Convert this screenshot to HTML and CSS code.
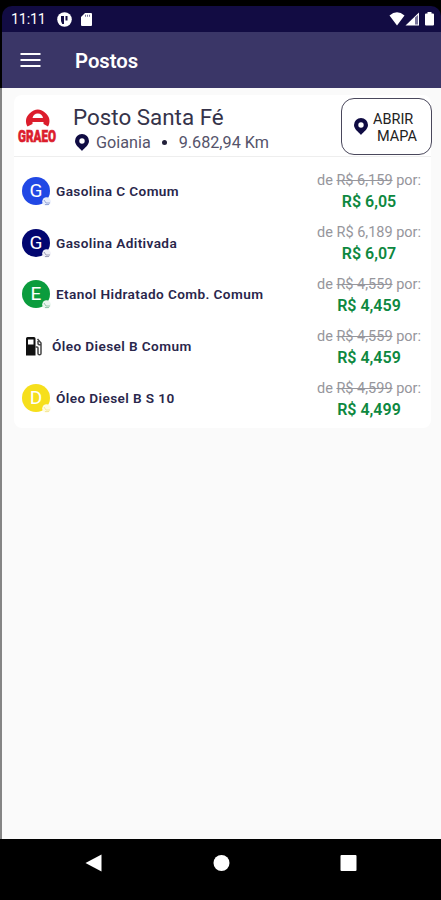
FILE: index.html
```html
<!DOCTYPE html>
<html lang="pt-BR">
<head>
    <meta charset="UTF-8">
    <meta name="viewport" content="width=device-width, initial-scale=1.0">
    <title>Postos</title>
    <link rel="stylesheet" href="styles.css">
</head>
<body>

<div class="phone">
    <div class="status-bar">
        <span class="clock">11:11</span>
        <svg class="status-app" width="15" height="15" viewBox="0 0 15 15">
            <circle cx="7.5" cy="7.5" r="7.3" fill="#fff"/>
            <path d="M4 4h3v8H5.2L4 9zM8.5 4h2v4.5h-2z" fill="#120c43"/>
        </svg>
        <svg class="status-card" width="11" height="13" viewBox="0 0 11 13">
            <path d="M4 0h6q1 0 1 1v11q0 1-1 1H1q-1 0-1-1V4z" fill="#fff"/>
            <path d="M4 1.8h1v2H4zM6 1.8h1v2H6zM8 1.8h1v2H8z" fill="#77739a"/>
        </svg>
        <svg class="status-signal" width="47" height="16" viewBox="0 0 47 16">
            <path d="M0.500 4.500Q8-1.800 15.500 4.500L8 14.500z" fill="#fff"/>
            <path d="M16.500 14.500L30 1.500v13z" fill="#fff"/>
            <path d="M26 6.500L29 4v9.500h-3z" fill="#77739a"/>
            <path d="M38.500 1h4v1.500h1.500q1 0 1 1v10q0 1-1 1h-7q-1 0-1-1v-10q0-1 1-1h1.500z" fill="#fff"/>
        </svg>
    </div>

    <div class="app-bar">
        <svg class="menu" width="21" height="16" viewBox="0 0 21 16">
            <path d="M0.500 2h20M0.500 8h20M0.500 14h20" stroke="#fff" stroke-width="2"/>
        </svg>
        <h1 class="title">Postos</h1>
    </div>

    <main class="content">
        <div class="card">
            <div class="station">
                <svg class="logo" width="41" height="46" viewBox="0 0 41 46">
                    <path d="M10.500 20.500C8 16.500 8.500 11 12.500 7.500Q20.800-0.500 29 7.500C33 11 33.500 16.500 31 20.500L26.500 18V16H15.500v2z" fill="#dc1d2c"/>
                    <path d="M15.500 12Q16.500 7.500 20.800 7.500T26 12z" fill="#fff"/>
                    <text transform="translate(1 36) scale(0.93 1.36)" class="logo-text">GRAEO</text>
                </svg>
                <div class="station-info">
                    <h2 class="station-name">Posto Santa Fé</h2>
                    <div class="station-place">
                        <svg class="pin" width="14" height="17" viewBox="0 0 14 17">
                            <path d="M7 0a7 7 0 0 0-7 7c0 4 4.500 7 7 10 2.500-3 7-6 7-10a7 7 0 0 0-7-7zm0 4.300a2.700 2.700 0 1 1 0 5.400 2.700 2.700 0 0 1 0-5.400z" fill="#100c43"/>
                        </svg>
                        <span class="city">Goiania</span>
                        <span class="dot"></span>
                        <span class="distance">9.682,94 Km</span>
                    </div>
                </div>
                <button class="map-button">
                    <svg width="14" height="17" viewBox="0 0 14 17">
                        <path d="M7 0a7 7 0 0 0-7 7c0 4 4.500 7 7 10 2.500-3 7-6 7-10a7 7 0 0 0-7-7zm0 4.300a2.700 2.700 0 1 1 0 5.400 2.700 2.700 0 0 1 0-5.400z" fill="#100c43"/>
                    </svg>
                    <span class="map-label">ABRIR<br><span class="map-second">MAPA</span></span>
                </button>
            </div>

            <ul class="fuels">
                <li class="fuel">
                    <span class="badge blue">G<svg class="drop" width="9" height="9" viewBox="0 0 9 9"><circle cx="4.500" cy="4.500" r="4.300" fill="#e8edfb"/><path d="M2 3l2 3h4M3 7.500h4" fill="none" stroke="#8295cf" stroke-width=".8"/></svg></span>
                    <span class="fuel-name">Gasolina C Comum</span>
                    <div class="price"><div class="old">de <s>R$ 6,159</s> por:</div><div class="new">R$ 6,05</div></div>
                </li>
                <li class="fuel">
                    <span class="badge navy">G<svg class="drop" width="9" height="9" viewBox="0 0 9 9"><circle cx="4.500" cy="4.500" r="4.300" fill="#eeeef6"/><path d="M2 3l2 3h4M3 7.500h4" fill="none" stroke="#8b8ba9" stroke-width=".8"/></svg></span>
                    <span class="fuel-name">Gasolina Aditivada</span>
                    <div class="price"><div class="old">de R$ 6,189 por:</div><div class="new">R$ 6,07</div></div>
                </li>
                <li class="fuel">
                    <span class="badge green">E<svg class="drop" width="9" height="9" viewBox="0 0 9 9"><circle cx="4.500" cy="4.500" r="4.300" fill="#e9f5ee"/><path d="M2 3l2 3h4M3 7.500h4" fill="none" stroke="#83b99a" stroke-width=".8"/></svg></span>
                    <span class="fuel-name">Etanol Hidratado Comb. Comum</span>
                    <div class="price"><div class="old">de <s>R$ 4,559</s> por:</div><div class="new">R$ 4,459</div></div>
                </li>
                <li class="fuel">
                    <svg class="pump" width="17" height="19" viewBox="0 0 17 19">
                        <path d="M1.500 0h6.500q1.500 0 1.500 1.500V18.500H0V1.500Q0 0 1.500 0zM2 2.500v5h5.500v-5z" fill="#111"/>
                        <path d="M9.500 10h1.500q1 0 1 1v5.500q0 1.300 1.500 1.300t1.500-1.300V6l-3.500-4M12 4v2.500q0 1.500 3 1.500" fill="none" stroke="#444" stroke-width="1.500"/>
                    </svg>
                    <span class="fuel-name">Óleo Diesel B Comum</span>
                    <div class="price"><div class="old">de <s>R$ 4,559</s> por:</div><div class="new">R$ 4,459</div></div>
                </li>
                <li class="fuel">
                    <span class="badge yellow">D<svg class="drop" width="9" height="9" viewBox="0 0 9 9"><circle cx="4.500" cy="4.500" r="4.300" fill="#fffbe0"/><path d="M2 3l2 3h4M3 7.500h4" fill="none" stroke="#f2e48b" stroke-width=".8"/></svg></span>
                    <span class="fuel-name">Óleo Diesel B S 10</span>
                    <div class="price"><div class="old">de <s>R$ 4,599</s> por:</div><div class="new">R$ 4,499</div></div>
                </li>
            </ul>
        </div>
    </main>

    <div class="nav-bar">
        <svg width="17" height="18" viewBox="0 0 17 18"><path d="M0.500 9L16.500 0.500v17z" fill="#fff"/></svg>
        <svg width="17" height="18" viewBox="0 0 17 18"><circle cx="8.500" cy="9" r="8" fill="#fff"/></svg>
        <svg width="17" height="18" viewBox="0 0 17 18"><rect x="0.500" y="1" width="16" height="16" rx="1" fill="#fff"/></svg>
    </div>
</div>

</body>
</html>
```
FILE: styles.css
```css
* {
    box-sizing: border-box;
}

body {
    margin: 0;
    background-color: #000000;
    font-family: Roboto, "Liberation Sans", sans-serif;
}

.phone {
    display: flex;
    flex-direction: column;
    height: 900px;
    padding-top: 6px;
    overflow: hidden;
}

.status-bar {
    display: flex;
    align-items: center;
    height: 26px;
    margin-left: 2px;
    padding: 0 5px 0 9px;
    background-color: #120c43;
    border-radius: 10px 10px 0 0;
    color: #fff;
}

.clock {
    width: 46px;
    font-size: 14.5px;
    letter-spacing: -0.3px;
}

.status-card {
    margin-left: 9px;
}

.status-signal {
    margin-left: auto;
}

.app-bar {
    display: flex;
    align-items: center;
    height: 56px;
    padding-left: 18px;
    margin-left: 2px;
    background-color: #3a3667;
    color: #fff;
}

.title {
    margin: 1px 0 0 34px;
    font-size: 20.3px;
    font-weight: 600;
}

.content {
    flex: 1;
    padding: 7px 10px 0 12px;
    border-left: 2px solid #858585;
    background-color: #fafafa;
}

.card {
    height: 333px;
    background-color: #fff;
    border-radius: 8px;
}

.station {
    display: flex;
    height: 62px;
    border-bottom: 1px solid #eeeeee;
}

.logo {
    margin: 11px 0 0 3px;
    overflow: visible;
}

.logo-text {
    font-size: 12.5px;
    font-weight: 900;
    fill: #dc1d2c;
    stroke: #dc1d2c;
    stroke-width: 0.5px;
}

.station-info {
    margin-left: 15px;
    padding-top: 9px;
}

.station-name {
    margin: 0;
    font-size: 22.4px;
    font-weight: 400;
    line-height: 26px;
    color: #35334a;
    white-space: nowrap;
}

.station-place {
    display: flex;
    align-items: center;
    height: 25px;
    margin-left: 2px;
    font-size: 16.2px;
    color: #55536a;
}

.city {
    margin-left: 7px;
}

.dot {
    width: 5px;
    height: 5px;
    margin: 0 12px 0 11px;
    border-radius: 50%;
    background-color: #22203a;
}

.map-button {
    display: flex;
    align-items: center;
    width: 91px;
    height: 57px;
    margin: 3px -1px 0 auto;
    padding: 0 0 0 12px;
    border: 1px solid #4a485c;
    border-radius: 13px;
    background-color: #fff;
    font-family: inherit;
    font-size: 14.5px;
    line-height: 17px;
    color: #222;
    text-align: left;
}

.map-label {
    margin: 2px 0 0 5px;
}

.map-second {
    margin-left: 4px;
}

.fuels {
    margin: 0;
    padding: 8px 9px 0 8px;
    list-style: none;
}

.fuel {
    display: flex;
    align-items: center;
    height: 51.8px;
}

.badge {
    position: relative;
    width: 28px;
    height: 28px;
    border-radius: 50%;
    color: #fff;
    font-size: 19px;
    line-height: 28px;
    text-align: center;
}

.drop {
    position: absolute;
    right: -1px;
    bottom: -1px;
}

.blue {
    background-color: #2148e5;
}

.navy {
    background-color: #020670;
}

.green {
    background-color: #0b9c3d;
}

.yellow {
    background-color: #f6df1c;
}

.pump {
    margin: 0 3px 0 4px;
}

.fuel-name {
    margin-left: 6px;
    font-size: 13.6px;
    font-weight: 600;
    letter-spacing: 0.4px;
    color: #29264b;
    white-space: nowrap;
}

.price {
    width: 106px;
    margin-left: auto;
    padding-top: 3px;
    text-align: center;
    white-space: nowrap;
}

.old {
    font-size: 14.5px;
    line-height: 20px;
    color: #96969c;
}

.new {
    font-size: 16px;
    font-weight: 600;
    line-height: 22px;
    color: #0d8840;
}

.nav-bar {
    display: flex;
    align-items: center;
    justify-content: space-between;
    height: 61px;
    padding: 0 84px 14px 85px;
}
```
